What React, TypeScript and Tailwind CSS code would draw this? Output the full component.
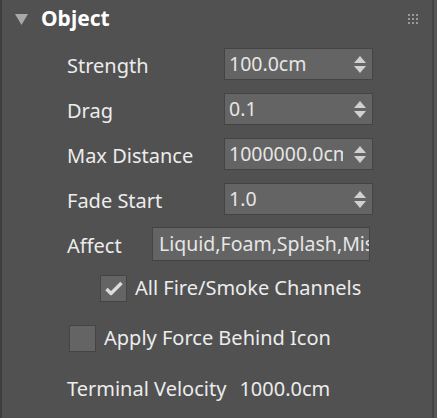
import React from "react";

const font = { fontFamily: '"Noto Sans", "Open Sans", sans-serif' };

function Spinner() {
  return (
    <svg width="12" height="17" viewBox="0 0 12 17" className="shrink-0">
      <path d="M6 0 L12 7 L0 7 Z" fill="#d0d0d0" />
      <path d="M0 10 L12 10 L6 17 Z" fill="#d0d0d0" />
    </svg>
  );
}

function SpinRow({ label, value }: { label: string; value: string }) {
  return (
    <div className="flex h-8 items-center">
      <div className="w-[157px] whitespace-nowrap pt-1 text-[20px] leading-7 text-[#ececec]">{label}</div>
      <div className="flex h-8 w-[149px] items-center border border-[#444444] bg-[#646464] pl-[4px] pr-[6px]">
        <div className="w-[114px] overflow-hidden whitespace-nowrap text-[19.5px] leading-7 text-[#e6e6e6]">{value}</div>
        <div className="ml-auto">
          <Spinner />
        </div>
      </div>
    </div>
  );
}

function Check({ checked, label }: { checked?: boolean; label: string }) {
  return (
    <div className="flex h-[26px] items-center">
      <div className="flex h-[27px] w-[27px] items-center justify-center border border-[#444444] bg-[#646464]">
        {checked && (
          <svg width="18" height="16" viewBox="0 0 18 16">
            <path d="M1.5 9 L6 13.5 L16.5 3" fill="none" stroke="#dcdcdc" strokeWidth="3.4" strokeLinejoin="round" />
          </svg>
        )}
      </div>
      <div className="ml-[8px] whitespace-nowrap text-[20px] leading-7 text-[#ececec]">{label}</div>
    </div>
  );
}

export default function App() {
  return (
    <div className="h-[418px] w-[437px] overflow-hidden bg-[#565656]" style={font}>
      <div className="h-[418px] w-[434px] border-l-2 border-r-2 border-l-[#3e3e3e] border-r-[#444444] bg-[#515151]">
        {/* header */}
        <div className="flex h-[38px] items-center pl-[13px] pr-[14px]">
          <svg width="13" height="11" viewBox="0 0 13 11">
            <path d="M0 0 L13 0 L6.5 11 Z" fill="#a8a8a8" />
          </svg>
          <div className="ml-[13px] text-[21px] font-bold text-white">Object</div>
          <div className="ml-auto grid grid-cols-3 gap-[2px]">
            {Array.from({ length: 9 }).map((_, i) => (
              <div key={i} className="h-[2px] w-[2px] bg-[#9a9a9a]" />
            ))}
          </div>
        </div>

        <div className="flex flex-col gap-[13px] pl-[65px] pt-[10px]">
          <SpinRow label="Strength" value="100.0cm" />
          <SpinRow label="Drag" value="0.1" />
          <SpinRow label="Max Distance" value="1000000.0cm" />
          <SpinRow label="Fade Start" value="1.0" />
          <div className="flex h-8 items-center">
            <div className="w-[85px] pt-1 text-[20px] leading-7 text-[#ececec]">Affect</div>
            <div className="flex h-[34px] w-[218px] items-center overflow-hidden whitespace-nowrap border border-[#444444] bg-[#646464] pl-[6px] text-[19.5px] leading-7 text-[#e6e6e6]">
              Liquid,Foam,Splash,Mist
            </div>
          </div>
        </div>

        <div className="mt-[15px] pl-[98px]">
          <Check checked label="All Fire/Smoke Channels" />
        </div>
        <div className="mt-[24px] pl-[67px]">
          <Check label="Apply Force Behind Icon" />
        </div>
        <div className="mt-[22px] flex pl-[65px] text-[20px] leading-8 text-[#ececec]">
          <span>Terminal Velocity</span>
          <span className="ml-[13px]">1000.0cm</span>
        </div>
      </div>
    </div>
  );
}
